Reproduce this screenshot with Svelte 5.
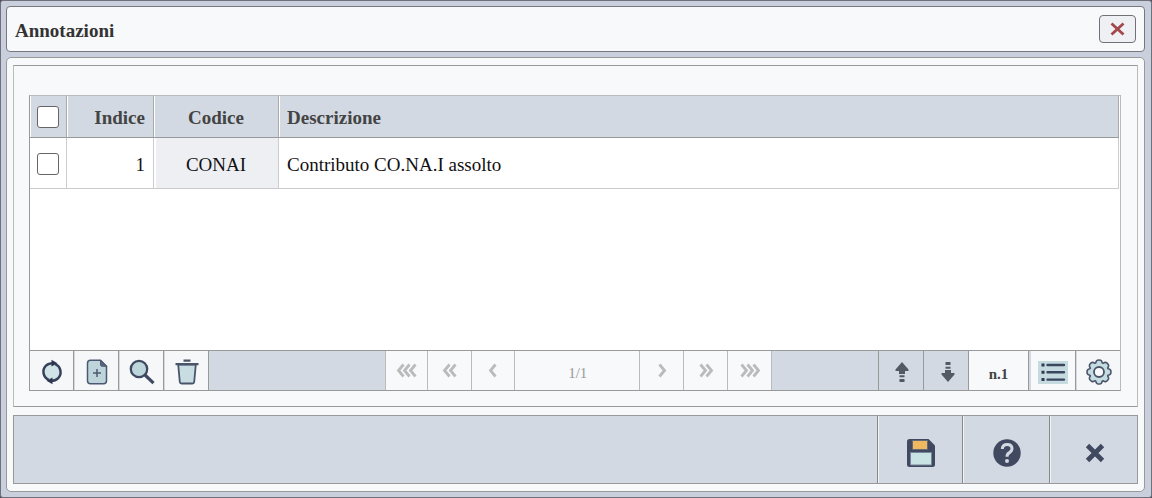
<script lang="ts">
  type Row = { indice: number; codice: string; descrizione: string; checked: boolean };

  let rows = $state<Row[]>([
    { indice: 1, codice: 'CONAI', descrizione: 'Contributo CO.NA.I assolto', checked: false },
  ]);
  let page = $state(1);
  const pages = 1;

  const allChecked = $derived(rows.length > 0 && rows.every(r => r.checked));

  function toggleAll() {
    const v = !allChecked;
    for (const r of rows) r.checked = v;
  }

  const back = [
    { n: 3, label: 'Prima pagina', w: 'w42' },
    { n: 2, label: 'Indietro veloce', w: 'w44' },
    { n: 1, label: 'Pagina precedente', w: 'w43' },
  ];
  const forward = [
    { n: 1, label: 'Pagina successiva', w: 'w44' },
    { n: 2, label: 'Avanti veloce', w: 'w44' },
    { n: 3, label: 'Ultima pagina', w: 'w44' },
  ];

  // chevrons are 6px apart, centred in a 24px box
  const chevrons = (n: number, dir: number) =>
    Array.from({ length: n }, (_, i) => {
      const x = 12 + (i - (n - 1) / 2) * 6;
      return `M${x + 2.5 * dir} 5.5L${x - 2.5 * dir} 11.5L${x + 2.5 * dir} 17.5`;
    }).join('');

  // scalloped outline of the settings wheel
  const gear = Array.from({ length: 8 }, (_, i) => {
    const p = (r: number, deg: number) => {
      const a = ((i * 45 + deg - 90) * Math.PI) / 180;
      return `${(13 + r * Math.cos(a)).toFixed(2)} ${(13 + r * Math.sin(a)).toFixed(2)}`;
    };
    return `${i ? 'L' : 'M'}${p(9.8, -19)}Q${p(11.6, -14)} ${p(11.8, -8)}Q${p(12.2, 0)} ${p(11.8, 8)}Q${p(11.6, 14)} ${p(9.8, 19)}Q${p(9.2, 22.5)} ${p(9.8, 26)}`;
  }).join('') + 'Z';
</script>

<div class="window">
  <header class="titlebar">
    <h1>Annotazioni</h1>
    <button class="close" aria-label="Chiudi">
      <svg width="16" height="14" viewBox="0 0 16 14"><path d="M1.5 1.5L13.500 12.5M13.500 1.5L1.5 12.5" stroke="#a3474c" stroke-width="2.8" /></svg>
    </button>
  </header>

  <main class="panel">
    <section class="content">
      <div class="grid">
        <div class="body">
          <table>
            <colgroup><col class="c-check" /><col class="c-index" /><col class="c-code" /><col /></colgroup>
            <thead>
              <tr>
                <th><input type="checkbox" aria-label="Seleziona tutto" checked={allChecked} onchange={toggleAll} /></th>
                <th class="right">Indice</th>
                <th class="center">Codice</th>
                <th class="left">Descrizione</th>
              </tr>
            </thead>
            <tbody>
              {#each rows as r}
                <tr>
                  <td><input type="checkbox" aria-label="Seleziona riga {r.indice}" bind:checked={r.checked} /></td>
                  <td class="right">{r.indice}</td>
                  <td class="center code">{r.codice}</td>
                  <td class="left">{r.descrizione}</td>
                </tr>
              {/each}
            </tbody>
          </table>
        </div>

        <div class="toolbar">
          <button class="tool w44" aria-label="Aggiorna">
            <svg width="26" height="26" viewBox="0 0 26 26">
              <circle cx="13" cy="13" r="7.5" fill="#d0e3e6" />
              <path d="M9.800 20.900A8.7 8.7 0 0 1 7 6.700Q9.500 4.200 14 4.200M16.200 5.100A8.7 8.7 0 0 1 19 19.300Q16.500 21.800 12 21.800" fill="none" stroke="#35415a" stroke-width="2.5" />
              <path d="M12.5 .8L18.5 4.2L12.5 7.600ZM13.500 18.400L7.500 21.8L13.500 25.200Z" fill="#2b3650" />
            </svg>
          </button>
          <button class="tool w45" aria-label="Nuovo">
            <svg width="26" height="26" viewBox="0 0 26 26">
              <path d="M6.5 1.2H16.5L22.5 7.2V21.8Q22.5 24.8 19.5 24.8H6.5Q3.5 24.8 3.5 21.8V4.2Q3.5 1.2 6.5 1.2Z" fill="#bdd5da" stroke="#4d5870" stroke-width="1.5" />
              <path d="M16.5 1.2L22.5 7.2H18Q16.5 7.2 16.5 5.7Z" fill="#5a6580" stroke="#4d5870" />
              <path d="M13 10V18M9 14H17" stroke="#4d5870" stroke-width="1.5" />
            </svg>
          </button>
          <button class="tool w45" aria-label="Cerca">
            <svg width="26" height="26" viewBox="0 0 26 26">
              <circle cx="10" cy="10" r="8.200" fill="#bdd6dc" stroke="#3f4961" stroke-width="2.3" />
              <path d="M16 16L24.5 24.200" stroke="#3f4961" stroke-width="3.2" />
            </svg>
          </button>
          <button class="tool w45" aria-label="Elimina">
            <svg width="26" height="26" viewBox="0 0 26 26">
              <path d="M4.200 5.5H21.800L20.200 23Q20 24.5 18.500 24.5H7.500Q6 24.5 5.800 23Z" fill="#c8dde2" stroke="#4a546b" stroke-width="1.8" />
              <path d="M1.500 5.200H24.500M9.500 1.700H16.500" stroke="#4a546b" stroke-width="2.200" />
            </svg>
          </button>
          <div class="fill long"></div>
          {#each back as b}
            <button class="tool nav {b.w}" aria-label={b.label} disabled={page === 1}>
              <svg width="24" height="24" viewBox="0 0 24 24"><path d={chevrons(b.n, 1)} /></svg>
            </button>
          {/each}
          <span class="pages">{page}/{pages}</span>
          {#each forward as b}
            <button class="tool nav {b.w}" aria-label={b.label} disabled={page === pages}>
              <svg width="24" height="24" viewBox="0 0 24 24"><path d={chevrons(b.n, -1)} /></svg>
            </button>
          {/each}
          <div class="fill"></div>
          <button class="tool move w45" aria-label="Sposta su">
            <svg width="14" height="20" viewBox="0 0 14 20"><path d="M7 0L13.500 7.500V9H10V12H4V9H.5V7.500ZM4.500 13.200H9.500V15.200H4.500ZM4.500 17H9.500V20H4.500Z" /></svg>
          </button>
          <button class="tool move w45" aria-label="Sposta giù">
            <svg width="14" height="20" viewBox="0 0 14 20"><path d="M7 20L13.500 12.500V11H10V8H4V11H.5V12.500ZM4.500 4.800H9.500V6.800H4.500ZM4.500 0H9.500V3H4.500Z" /></svg>
          </button>
          <span class="count">n.{rows.length}</span>
          <button class="tool list w47" aria-label="Elenco">
            <svg width="30" height="23" viewBox="0 0 30 23">
              <path d="M0 0H30V23H0Z" fill="#c5dbe0" />
              <path d="M3.500 4H6.500M3.500 11.300H6.500M3.500 18.600H6.500" stroke="#2f3a52" stroke-width="3" />
              <path d="M9.500 4H26M9.500 11.300H26M9.500 18.600H26" stroke="#3b465f" stroke-width="2.400" stroke-linecap="round" />
            </svg>
          </button>
          <button class="tool w44 last" aria-label="Impostazioni">
            <svg width="26" height="26" viewBox="0 0 26 26">
              <path d={gear} fill="#c5dde1" stroke="#4a546b" stroke-width="1.600" stroke-linejoin="round" />
              <circle cx="13" cy="13" r="5" fill="#f8f9fb" stroke="#4a546b" stroke-width="1.800" />
            </svg>
          </button>
        </div>
      </div>
    </section>

    <footer class="actions">
      <button class="save" aria-label="Salva">
        <svg width="28" height="28" viewBox="0 0 28 28">
          <path d="M2.500 0H21.500L28 6.500V25.500Q28 28 25.500 28H2.500Q0 28 0 25.500V2.500Q0 0 2.500 0Z" fill="#414961" />
          <path d="M5.500 1.500H20.500V10.500H5.500Z" fill="#f0b960" stroke="#656a78" />
          <path d="M3.500 13.500H24.500V26H3.500Z" fill="#c9e3e5" stroke="#77849a" />
        </svg>
      </button>
      <button class="help" aria-label="Aiuto">
        <svg width="28" height="28" viewBox="0 0 28 28">
          <circle cx="14" cy="14" r="13.700" fill="#414961" />
          <path d="M9.300 10Q9.500 5.500 14.200 5.500Q19 5.500 19 9.600Q19 12 16.400 13.600Q14 15 14 17.800" fill="none" stroke="#d2d9e3" stroke-width="3" />
          <circle cx="14" cy="22" r="2" fill="#d2d9e3" />
        </svg>
      </button>
      <button class="exit" aria-label="Esci">
        <svg width="20" height="20" viewBox="0 0 20 20"><path d="M2.500 2.500L17.500 17.500M17.500 2.500L2.500 17.500" stroke="#414961" stroke-width="4.800" /></svg>
      </button>
    </footer>
  </main>
</div>

<style>
  :global(body) { margin: 0; background: #4a4d58; }
  .window { box-sizing: border-box; min-height: 100vh; padding: 5px 6px 5px 5px; border: 1px solid #6f7179; border-radius: 3px; background: #c9cfdc; display: flex; flex-direction: column; gap: 5px; font-family: "Liberation Serif", "Times New Roman", serif; font-size: 19px; color: #111; }
  button { margin: 0; padding: 0; border: 0; background: none; font: inherit; color: inherit; display: flex; align-items: center; justify-content: center; box-sizing: border-box; }
  svg { display: block; }

  .titlebar { box-sizing: border-box; height: 46px; padding: 0 8px; display: flex; align-items: center; justify-content: space-between; background: #f8f9fb; border: 1px solid #77787e; border-radius: 4px; }
  h1 { margin: 0; padding-top: 4px; font-size: 19px; line-height: 22px; font-weight: bold; color: #333; }
  .close { width: 37px; height: 28px; background: #eff0f4; border: 1px solid #707278; border-radius: 4px; }

  .panel { flex: 1; display: flex; flex-direction: column; gap: 8px; padding: 7px 6px; background: #f8f9fb; border: 1px solid #999; border-radius: 5px; }
  .content { flex: 1; display: flex; flex-direction: column; padding: 29px 16px 15px 15px; border: 1px solid #bbb; border-top-color: #999; border-bottom-color: #999; }

  .grid { flex: 1; display: flex; flex-direction: column; border: 1px solid #bbb; border-left-color: #999; border-bottom-color: #999; }
  .body { flex: 1; padding-right: 1px; background: #fff; }
  table { width: 100%; table-layout: fixed; border-collapse: separate; border-spacing: 0; }
  .c-check { width: 37px; }
  .c-index { width: 87px; }
  .c-code { width: 125px; }
  th, td { box-sizing: border-box; padding: 0 8px; font-size: 19px; line-height: 22px; }
  th { height: 42px; padding-top: 2px; background: #d2d9e3; border-right: 1px solid #aaa; border-bottom: 1px solid #999; box-shadow: inset 1px 0 #fff; color: #444; }
  td { height: 51px; padding-top: 4px; border-right: 1px solid #ccc; border-bottom: 1px solid #ccc; }
  th:first-child { padding: 0; }
  td:first-child { padding: 2px 0 0; }
  .right { text-align: right; }
  .center { text-align: center; }
  .left { text-align: left; }
  .code { background: #eeeff3; box-shadow: inset 2px 0 #fff; }
  input { appearance: none; display: block; box-sizing: border-box; width: 22px; height: 22px; margin: 0 auto 0 7px; background: #fff; border: 1px solid #666; border-radius: 3px; }
  input:checked { background: #414961; }

  .toolbar { display: flex; height: 39px; border-top: 1px solid #999; background: #f8f9fb; }
  .tool, .pages, .count { flex: none; box-sizing: border-box; border-right: 1px solid #999; }
  .tool { background: #f6f7f9; padding: 3px 0 0 1px; }
  .tool + .tool:not(.nav) { border-left: 1px solid #d2d9e3; }
  .w42 { width: 42px; }
  .w43 { width: 43px; }
  .w44 { width: 44px; }
  .w45 { width: 45px; }
  .w47 { width: 47px; }
  .last { border-right: 0; }
  .fill { flex: 3 1 0; box-sizing: border-box; background: #d2d9e3; border-right: 1px solid #999; }
  .long { flex-grow: 5; border-right-color: #bbb; }
  .nav { background: #f8f9fb; border-right-color: #bbb; padding: 0; }
  .nav path { fill: none; stroke: #bbb; stroke-width: 2.8; }
  .pages { width: 125px; padding: 6px 0 0 1px; border-right-color: #bbb; text-align: center; font-size: 15px; line-height: 32px; color: #999; }
  .tool.move { background: #d2d9e3; padding: 2px 0 0 2px; }
  .move path { fill: #555962; }
  .count { width: 60px; padding-top: 8px; text-align: center; font-size: 15px; line-height: 30px; font-weight: bold; color: #444; }
  .list { border-left: 2px solid #d2d9e3; background: #f8f9fb; padding-left: 0; }

  .actions { box-sizing: border-box; height: 69px; display: flex; justify-content: flex-end; background: #d2d9e3; border: 1px solid #999; }
  .actions button { border-left: 1px solid #888; box-shadow: inset 1px 0 #f3f3f3; padding: 7px 0 0 2px; }
  .save { width: 85px; }
  .help { width: 87px; }
  .exit { width: 88px; }
</style>
